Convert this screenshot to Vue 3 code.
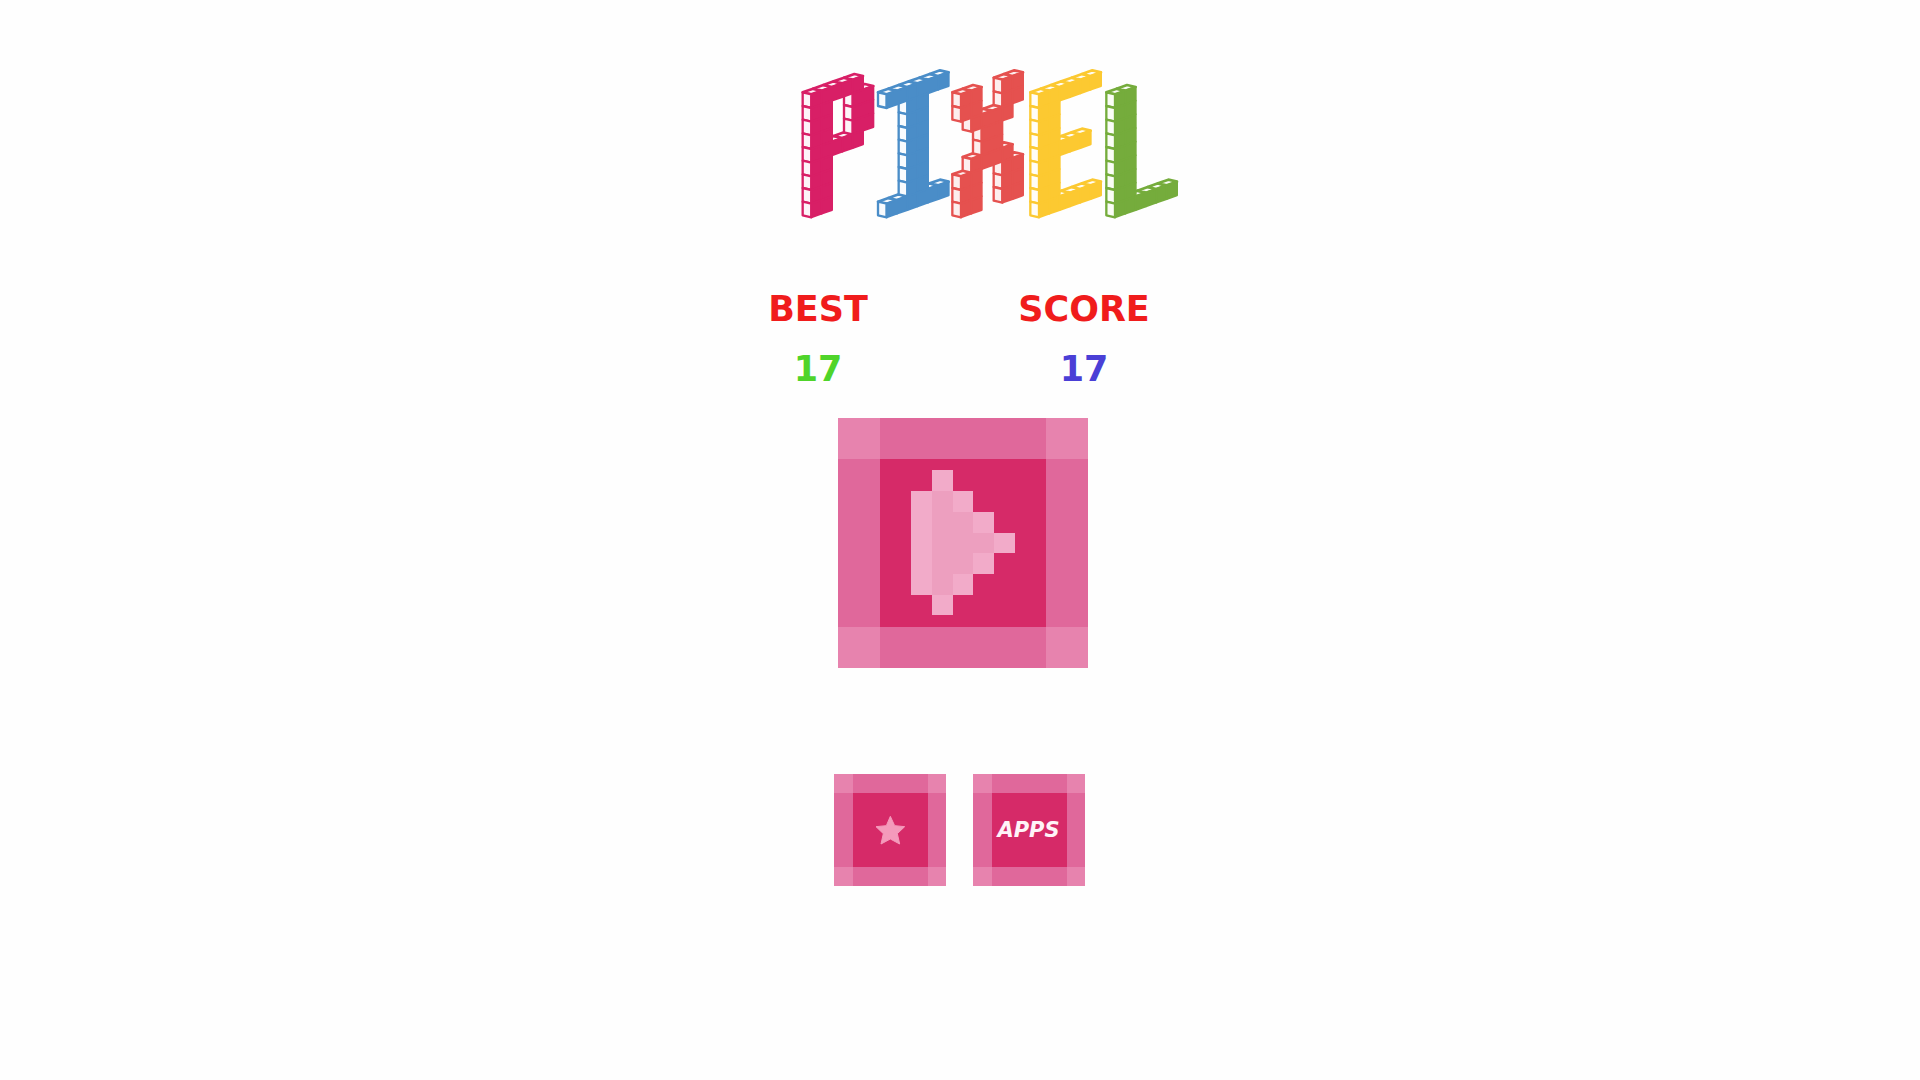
<script setup>
// Block artwork for the logo: each row is a string of filled (1) and empty (0) cubes.
const CELL_W = 31
const CELL_H = 41
const RISE = 11
const DEPTH_X = 26
const DEPTH_Y = 6
const TOP = 103

const blocks = [
  {
    x: 64, color: '#d81f66', tile: '#fdf3f8',
    rows: ['11111', '110011', '110011', '110011', '11111', '11', '11', '11', '11']
  },
  {
    x: 290, color: '#4a8dc8', tile: '#f8fbfe',
    rows: ['111111', '0011', '0011', '0011', '0011', '0011', '0011', '0011', '111111']
  },
  {
    x: 513, color: '#e5514f', tile: '#fdeeee',
    rows: ['110011', '110011', '01111', '0011', '0011', '01111', '110011', '110011', '110011']
  },
  {
    x: 747, color: '#fcc931', tile: '#fffdf6',
    rows: ['111111', '11', '11', '11', '11111', '11', '11', '11', '111111']
  },
  {
    x: 975, color: '#75ac3c', tile: '#fafdf6',
    rows: ['11', '11', '11', '11', '11', '11', '11', '11', '111111']
  }
]

const points = (list) => list.map((p) => p.join(',')).join(' ')

const figures = blocks.map(({ x, color, tile, rows }) => {
  const filled = (r, c) => rows[r]?.[c] === '1'
  const sides = []
  const tops = []
  const fronts = []
  rows.forEach((row, r) => {
    for (let c = 0; c < row.length; c++) {
      if (!filled(r, c)) continue
      const left = x + c * CELL_W
      const right = left + CELL_W
      const y = TOP + r * CELL_H - c * RISE
      fronts.push(points([[left, y], [right, y - RISE], [right, y - RISE + CELL_H], [left, y + CELL_H]]))
      if (!filled(r, c - 1)) {
        sides.push(points([
          [left, y], [left - DEPTH_X, y - DEPTH_Y],
          [left - DEPTH_X, y - DEPTH_Y + CELL_H], [left, y + CELL_H]
        ]))
      }
      if (!filled(r - 1, c)) {
        tops.push(points([
          [left, y], [right, y - RISE],
          [right - DEPTH_X, y - RISE - DEPTH_Y], [left - DEPTH_X, y - DEPTH_Y]
        ]))
      }
    }
  })
  return { color, tile, sides, tops, fronts }
})

const scores = [
  { label: 'BEST', value: 17, tone: 'green' },
  { label: 'SCORE', value: 17, tone: 'blue' }
]
</script>

<template>
  <main class="screen">
    <h1 class="logo">
      <svg viewBox="0 0 1200 510" role="img" aria-label="Pixel">
        <g v-for="(f, i) in figures" :key="i" :stroke="f.color" stroke-linejoin="round">
          <polygon v-for="p in f.tops" :key="'t' + p" :points="p" :fill="f.tile" stroke-width="8" />
          <polygon v-for="p in f.sides" :key="'s' + p" :points="p" :fill="f.tile" stroke-width="7" />
          <polygon v-for="p in f.fronts" :key="'f' + p" :points="p" :fill="f.color" stroke-width="6" />
        </g>
      </svg>
    </h1>

    <dl class="scores">
      <div v-for="s in scores" :key="s.label" class="score">
        <dt>{{ s.label }}</dt>
        <dd :class="s.tone">{{ s.value }}</dd>
      </div>
    </dl>

    <button class="tile big" type="button" aria-label="Play">
      <svg viewBox="0 0 750 750" shape-rendering="crispEdges" aria-hidden="true">
        <path class="rim" d="M0 0H750V750H0Z" />
        <path class="corner" d="M0 0H127V123H0ZM625 0H750V123H625ZM0 627H127V750H0ZM625 627H750V750H625Z" />
        <path class="face" d="M127 123H625V627H127Z" />
        <path class="arrow-light" d="M283 157H345V220H405V282H467V345H530V405H467V467H405V530H345V592H283V530H220V220H283Z" />
        <path class="arrow-core" d="M283 220H345V282H405V345H467V405H405V467H345V530H283Z" />
      </svg>
    </button>

    <div class="actions">
      <button class="tile small" type="button" aria-label="Rate">
        <svg viewBox="0 0 336 336" aria-hidden="true">
          <path class="rim" d="M0 0H336V336H0Z" />
          <path class="corner" d="M0 0H57V57H0ZM282 0H336V57H282ZM0 279H57V336H0ZM282 279H336V336H282Z" />
          <path class="face" d="M57 57H282V279H57Z" />
          <path class="star" d="M169 127L182 155L212 158L190 179L197 210L169 195L141 210L148 179L126 158L157 155Z" />
        </svg>
      </button>
      <button class="tile small" type="button">
        <svg viewBox="0 0 336 336" aria-hidden="true">
          <path class="rim" d="M0 0H336V336H0Z" />
          <path class="corner" d="M0 0H57V57H0ZM282 0H336V57H282ZM0 279H57V336H0ZM282 279H336V336H282Z" />
          <path class="face" d="M57 57H282V279H57Z" />
        </svg>
        <span class="caption">APPS</span>
      </button>
    </div>
  </main>
</template>

<style>
body {
  margin: 0;
  background: #fefefe;
}
</style>

<style scoped>
.screen {
  box-sizing: border-box;
  min-height: 100vh;
  padding: 60px 16px;
  display: flex;
  flex-direction: column;
  align-items: center;
  font-family: "DejaVu Sans", sans-serif;
  font-weight: 700;
}

.logo {
  width: 400px;
  max-width: 100%;
  margin: 0;
  padding-left: 60px;
}

.logo svg,
.tile svg {
  display: block;
  width: 100%;
}

.scores {
  display: flex;
  margin: 49px 0 19px;
  padding-right: 18px;
  font-size: 35px;
  line-height: 60px;
  text-align: center;
}

.score {
  width: 266px;
}

dt {
  color: #f01c1c;
}

dd {
  margin: 0;
}

.green {
  color: #4fd42a;
}

.blue {
  color: #4a3fd6;
}

.tile {
  position: relative;
  padding: 0;
  border: 0;
  background: none;
  font: inherit;
  cursor: pointer;
}

.big {
  width: 250px;
  margin-left: 5px;
}

.small {
  width: 112px;
}

.actions {
  display: flex;
  gap: 27px;
  margin-top: 106px;
  padding-right: 2px;
}

.rim {
  fill: #e0689b;
}

.corner {
  fill: #e783ae;
}

.face {
  fill: #d62a68;
}

.arrow-light {
  fill: #f2abc9;
}

.arrow-core {
  fill: #ed9fbf;
}

.star {
  fill: #f49abb;
  stroke: #f49abb;
  stroke-width: 3;
  stroke-linejoin: round;
}

.caption {
  position: absolute;
  inset: 0;
  display: flex;
  align-items: center;
  justify-content: center;
  color: #fff3f8;
  font-size: 21px;
  font-style: oblique;
}
</style>
